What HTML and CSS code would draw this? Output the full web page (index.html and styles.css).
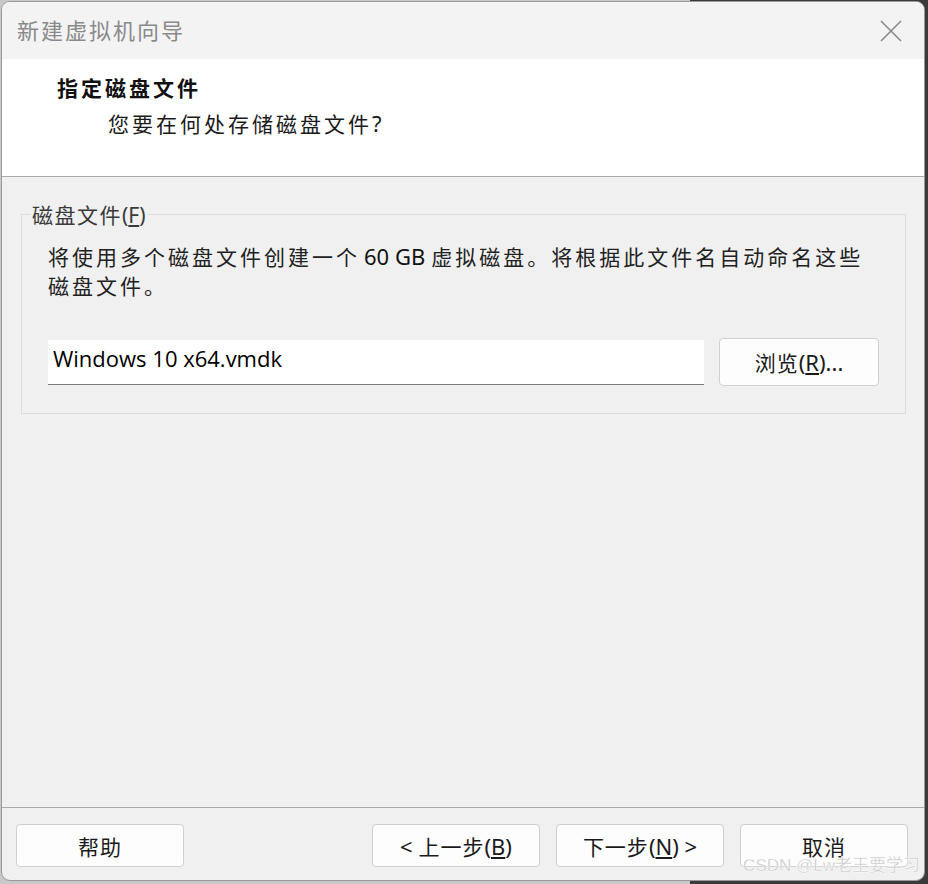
FILE: index.html
```html
<!DOCTYPE html>
<html lang="zh-CN">
<head>
<meta charset="utf-8">
<title>新建虚拟机向导</title>
<link rel="stylesheet" href="styles.css">
</head>
<body>
<div class="backdrop">
  <div class="window">
    <div class="titlebar">
      <span class="title">新建虚拟机向导</span>
      <svg class="close" width="22" height="22" viewBox="0 0 22 22"><path d="M1 1 L21 21 M21 1 L1 21" stroke="#8a8a8a" stroke-width="1.6" fill="none"/></svg>
    </div>
    <div class="header">
      <div class="h-title">指定磁盘文件</div>
      <div class="h-sub">您要在何处存储磁盘文件<span class="latin">?</span></div>
    </div>
    <div class="content">
      <fieldset class="group">
        <legend class="legend">磁盘文件<span class="latin">(<u>F</u>)</span></legend>
        <p class="desc">将使用多个磁盘文件创建一个<span class="latin gb">60 GB</span>虚拟磁盘。将根据此文件名自动命名这些磁盘文件。</p>
        <div class="file-row">
          <div class="input">Windows 10 x64.vmdk</div>
          <button class="btn browse">浏览<span class="latin">(<u>R</u>)...</span></button>
        </div>
      </fieldset>
    </div>
    <div class="footer">
      <button class="btn fbtn">帮助</button>
      <div class="spacer"></div>
      <button class="btn fbtn"><span class="latin">&lt; </span>上一步<span class="latin">(<u>B</u>)</span></button>
      <button class="btn fbtn">下一步<span class="latin">(<u>N</u>) &gt;</span></button>
      <button class="btn fbtn">取消</button>
    </div>
    <div class="watermark">CSDN @Lw老王要学习</div>
  </div>
</div>
</body>
</html>
```
FILE: styles.css
```css
html, body {
  margin: 0;
  padding: 0;
}
body {
  width: 928px;
  height: 884px;
  overflow: hidden;
  background: linear-gradient(to right, #c9c9c9 0, #c9c9c9 690px, #3a3a3a 690px, #3a3a3a 100%);
  font-family: "Noto Sans", "Noto Sans CJK SC", sans-serif;
}
.backdrop {
  padding: 1px 3px 3px 1px;
}
.window {
  position: relative;
  width: 922px;
  height: 878px;
  border: 1px solid #9a9a9a;
  border-radius: 9px;
  background: #f0f0f0;
  overflow: hidden;
  display: flex;
  flex-direction: column;
  color: #1a1a1a;
}
.latin {
  font-family: "Noto Sans", sans-serif;
  letter-spacing: 0;
}
.titlebar {
  height: 57px;
  background: #f3f3f3;
  display: flex;
  align-items: center;
  justify-content: space-between;
  padding: 0 22px 0 15px;
  flex: none;
}
.title {
  font-family: "Noto Sans CJK SC", sans-serif;
  font-size: 22px;
  letter-spacing: 2px;
  color: #8a8a8a;
  margin-top: -4px;
}
.header {
  height: 118px;
  background: #ffffff;
  border-bottom: 1px solid #a8a8a8;
  flex: none;
  box-sizing: border-box;
  padding-top: 12px;
}
.h-title {
  margin-left: 55px;
  font-family: "Noto Sans CJK SC", sans-serif;
  font-weight: 700;
  font-size: 21px;
  letter-spacing: 3px;
  line-height: 32px;
  color: #111;
}
.h-sub {
  margin-left: 106px;
  margin-top: 4px;
  font-family: "Noto Sans CJK SC", sans-serif;
  font-size: 21px;
  letter-spacing: 3px;
  line-height: 32px;
  color: #1a1a1a;
}
.h-sub .latin {
  font-size: 22px;
}
.content {
  flex: 1;
  padding: 22px 19px 0 19px;
}
.group {
  margin: 0;
  border: 1px solid #dcdcdc;
  padding: 0 26px 30px 26px;
  height: 215px;
  box-sizing: border-box;
}
.legend {
  padding: 0 1px;
  margin-left: -17px;
  font-family: "Noto Sans CJK SC", sans-serif;
  font-size: 21px;
  letter-spacing: 1.5px;
  color: #3a3a3a;
  line-height: 30px;
}
.desc {
  margin: 12px 0 0 0;
  font-family: "Noto Sans CJK SC", sans-serif;
  font-size: 21px;
  letter-spacing: 3px;
  line-height: 29px;
  color: #222;
}
.desc .latin {
  font-size: 22px;
  color: #111;
}
.desc .gb {
  margin: 0 6px 0 4px;
}
.file-row {
  display: flex;
  align-items: center;
  gap: 15px;
  margin-top: 38px;
}
.input {
  width: 656px;
  height: 45px;
  box-sizing: border-box;
  background: #fff;
  border-bottom: 1.5px solid #7a7a7a;
  font-family: "Open Sans", sans-serif;
  font-size: 22px;
  line-height: 36px;
  padding-left: 5px;
  color: #000;
}
.btn {
  background: #fdfdfd;
  border: 1px solid #d0d0d0;
  border-radius: 4px;
  font-family: "Noto Sans CJK SC", sans-serif;
  font-size: 21px;
  letter-spacing: 1px;
  color: #1a1a1a;
  padding: 0;
}
.btn .latin {
  font-size: 22px;
}
.browse {
  width: 160px;
  height: 48px;
}
.footer {
  flex: none;
  height: 73px;
  border-top: 1px solid #a8a8a8;
  box-sizing: border-box;
  padding: 16px 16px 0 14px;
  display: flex;
  gap: 16px;
  align-items: flex-start;
}
.spacer {
  flex: 1;
}
.fbtn {
  width: 168px;
  height: 43px;
}
.watermark {
  position: absolute;
  right: 4px;
  bottom: 4px;
  font-family: "Liberation Sans", "Noto Sans CJK SC", sans-serif;
  font-size: 17px;
  color: #c8c8c8;
  -webkit-text-stroke: 0.3px #ffffff;
  text-shadow: 0 0 1px #fff, 0 0 1px #fff;
}
```
